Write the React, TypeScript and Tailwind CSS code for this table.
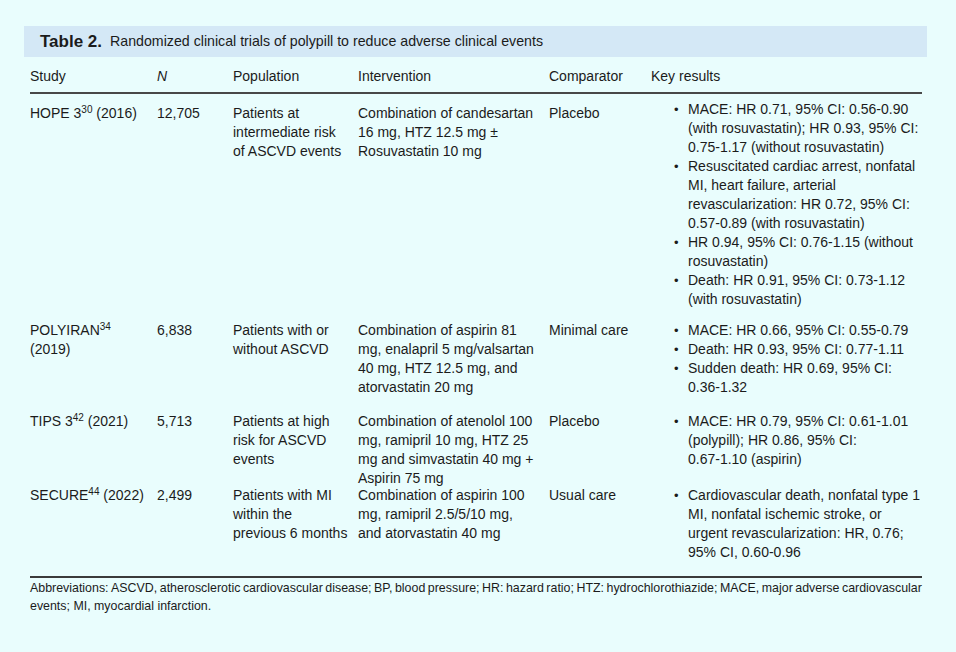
import React from "react";

const F = { fontFamily: '"Liberation Sans", Arial, sans-serif' };

function Sup({ children }: { children: React.ReactNode }) {
  return <sup className="text-[10px] relative top-[1px] align-super leading-none">{children}</sup>;
}

function Bullets({ items }: { items: React.ReactNode[] }) {
  return (
    <div className="pl-[23px]">
      {items.map((it, i) => (
        <div key={i} className="flex">
          <span className="w-[14px] shrink-0 text-[13px]">•</span>
          <div className="whitespace-nowrap">{it}</div>
        </div>
      ))}
    </div>
  );
}

type Row = {
  study: React.ReactNode;
  n: string;
  pop: React.ReactNode;
  inter: React.ReactNode;
  comp: string;
  results: React.ReactNode[];
  h: string;
  krShift?: boolean;
};

const rows: Row[] = [
  {
    study: (
      <>
        HOPE 3<Sup>30</Sup> (2016)
      </>
    ),
    n: "12,705",
    pop: (
      <>
        Patients at
        <br />
        intermediate risk
        <br />
        of ASCVD events
      </>
    ),
    inter: (
      <>
        Combination of candesartan
        <br />
        16 mg, HTZ 12.5 mg ±
        <br />
        Rosuvastatin 10 mg
      </>
    ),
    comp: "Placebo",
    results: [
      <>
        MACE: HR 0.71, 95% CI: 0.56-0.90
        <br />
        (with rosuvastatin); HR 0.93, 95% CI:
        <br />
        0.75-1.17 (without rosuvastatin)
      </>,
      <>
        Resuscitated cardiac arrest, nonfatal
        <br />
        MI, heart failure, arterial
        <br />
        revascularization: HR 0.72, 95% CI:
        <br />
        0.57-0.89 (with rosuvastatin)
      </>,
      <>
        HR 0.94, 95% CI: 0.76-1.15 (without
        <br />
        rosuvastatin)
      </>,
      <>
        Death: HR 0.91, 95% CI: 0.73-1.12
        <br />
        (with rosuvastatin)
      </>,
    ],
    h: "h-[217px]",
    krShift: true,
  },
  {
    study: (
      <>
        POLYIRAN<Sup>34</Sup>
        <br />
        (2019)
      </>
    ),
    n: "6,838",
    pop: (
      <>
        Patients with or
        <br />
        without ASCVD
      </>
    ),
    inter: (
      <>
        Combination of aspirin 81
        <br />
        mg, enalapril 5 mg/valsartan
        <br />
        40 mg, HTZ 12.5 mg, and
        <br />
        atorvastatin 20 mg
      </>
    ),
    comp: "Minimal care",
    results: [
      <>MACE: HR 0.66, 95% CI: 0.55-0.79</>,
      <>Death: HR 0.93, 95% CI: 0.77-1.11</>,
      <>
        Sudden death: HR 0.69, 95% CI:
        <br />
        0.36-1.32
      </>,
    ],
    h: "h-[91px]",
  },
  {
    study: (
      <>
        TIPS 3<Sup>42</Sup> (2021)
      </>
    ),
    n: "5,713",
    pop: (
      <>
        Patients at high
        <br />
        risk for ASCVD
        <br />
        events
      </>
    ),
    inter: (
      <>
        Combination of atenolol 100
        <br />
        mg, ramipril 10 mg, HTZ 25
        <br />
        mg and simvastatin 40 mg +
        <br />
        Aspirin 75 mg
      </>
    ),
    comp: "Placebo",
    results: [
      <>
        MACE: HR 0.79, 95% CI: 0.61-1.01
        <br />
        (polypill); HR 0.86, 95% CI:
        <br />
        0.67-1.10 (aspirin)
      </>,
    ],
    h: "h-[74px]",
  },
  {
    study: (
      <>
        SECURE<Sup>44</Sup> (2022)
      </>
    ),
    n: "2,499",
    pop: (
      <>
        Patients with MI
        <br />
        within the
        <br />
        previous 6 months
      </>
    ),
    inter: (
      <>
        Combination of aspirin 100
        <br />
        mg, ramipril 2.5/5/10 mg,
        <br />
        and atorvastatin 40 mg
      </>
    ),
    comp: "Usual care",
    results: [
      <>
        Cardiovascular death, nonfatal type 1
        <br />
        MI, nonfatal ischemic stroke, or
        <br />
        urgent revascularization: HR, 0.76;
        <br />
        95% CI, 0.60-0.96
      </>,
    ],
    h: "h-[90px]",
  },
];

const cols = "grid grid-cols-[127px_76px_125px_191px_102px_271px]";

export default function App() {
  return (
    <div
      className="w-[956px] h-[652px] bg-[#e9fdfd] pt-[26px] text-[#1b1b1b] overflow-hidden"
      style={F}
    >
      <div className="ml-[24px] w-[903px] h-[31px] bg-[#d4e8f6] flex items-center pl-[16px] text-[14.2px]">
        <span className="font-bold text-[17px] mr-[8px]">Table 2.</span>
        <span>Randomized clinical trials of polypill to reduce adverse clinical events</span>
      </div>
      <div className="ml-[30px] w-[892px] text-[14px] leading-[19px]">
        <div className={`${cols} pt-[10px] pb-[6px] border-b-2 border-[#484848]`}>
          <div>Study</div>
          <div className="italic">N</div>
          <div>Population</div>
          <div>Intervention</div>
          <div>Comparator</div>
          <div>Key results</div>
        </div>
        <div className="mt-[10px]">
          {rows.map((r, i) => (
            <div key={i} className={`${cols} ${r.h} whitespace-nowrap`}>
              <div>{r.study}</div>
              <div>{r.n}</div>
              <div>{r.pop}</div>
              <div>{r.inter}</div>
              <div>{r.comp}</div>
              <div className={r.krShift ? "-mt-[4px]" : ""}>
                <Bullets items={r.results} />
              </div>
            </div>
          ))}
        </div>
        <div className="border-t-2 border-[#3a3a3a] pt-[1px] text-[12.4px] leading-[18px]">
          <div className="whitespace-nowrap flex justify-between">
            {"Abbreviations: ASCVD, atherosclerotic cardiovascular disease; BP, blood pressure; HR: hazard ratio; HTZ: hydrochlorothiazide; MACE, major adverse cardiovascular"
              .split(" ")
              .map((w, i) => (
                <span key={i}>{w}</span>
              ))}
          </div>
          <div>events; MI, myocardial infarction.</div>
        </div>
      </div>
    </div>
  );
}
